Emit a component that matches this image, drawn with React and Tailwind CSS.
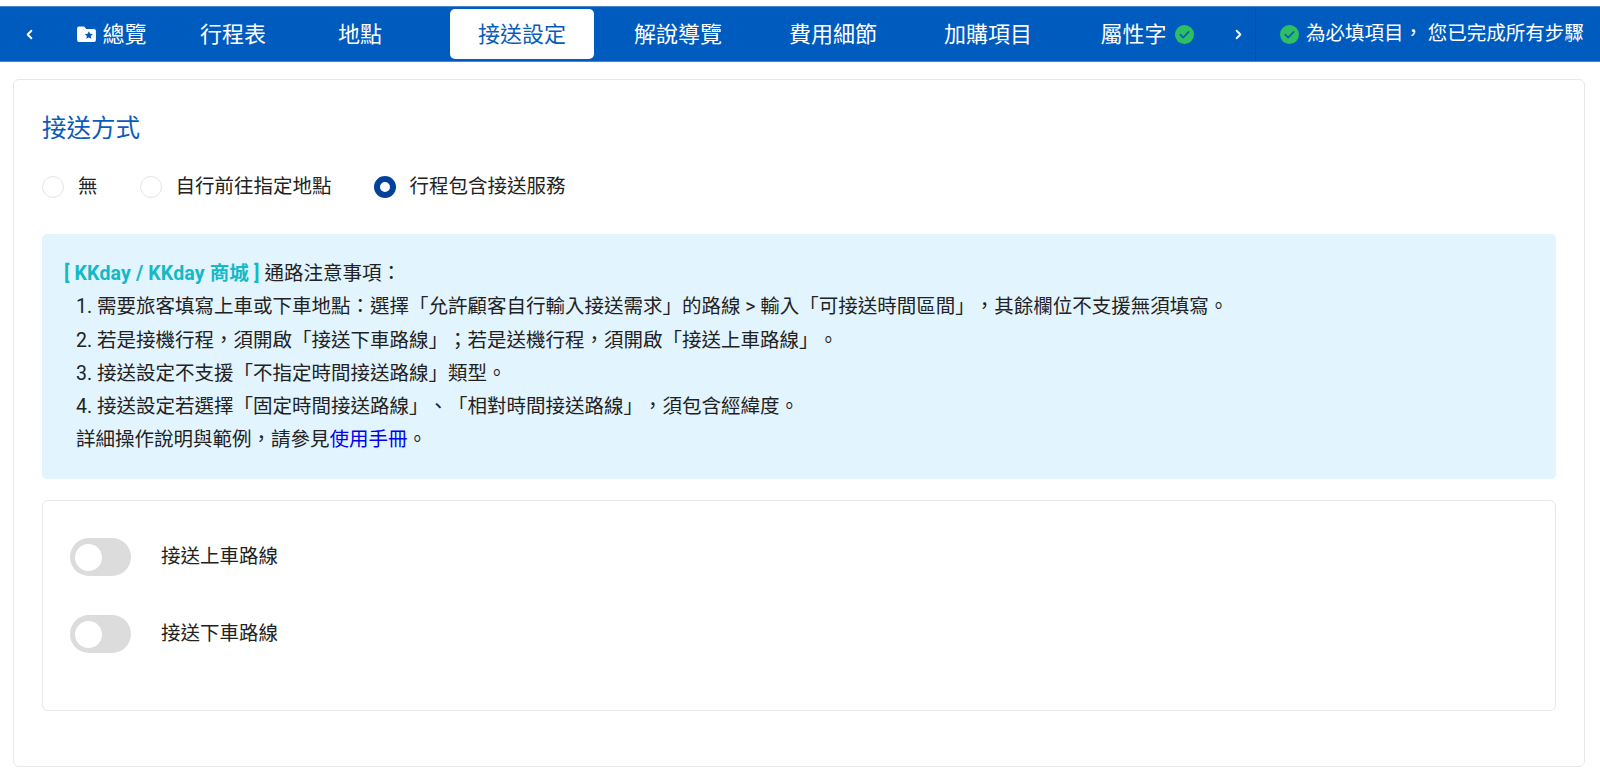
import { ChevronLeft, ChevronRight } from "lucide-react";

const font = { fontFamily: "Roboto, 'Noto Sans CJK TC', sans-serif" };

function CheckDot({ className }) {
  return (
    <svg className={className} viewBox="0 0 20 20">
      <circle cx="10" cy="10" r="10" fill="#2fbf63" />
      <path d="M5.6 10.2l3 3 5.8-6" fill="none" stroke="#0b5fb0" strokeWidth="1.8" strokeLinecap="round" strokeLinejoin="round" />
    </svg>
  );
}

function FolderStar() {
  return (
    <svg className="w-[19px] h-[16px] mr-[6px]" viewBox="0 0 20 17">
      <path d="M2 0.5h5.5l2.2 2.7H18a2 2 0 0 1 2 2V15a2 2 0 0 1-2 2H2a2 2 0 0 1-2-2V2.500a2 2 0 0 1 2-2z" fill="#fff" />
      <path d="M12.500 5.500l1.300 2.700 3 .4-2.200 2 .6 3-2.700-1.500-2.700 1.500.6-3-2.200-2 3-.4z" fill="#005bbf" />
    </svg>
  );
}

function Radio({ label, checked, gap }) {
  return (
    <label className={`flex items-center ${gap}`}>
      {checked ? (
        <span className="w-[22px] h-[22px] rounded-full border-[6px] border-[#05409a] bg-white" />
      ) : (
        <span className="w-[22px] h-[22px] rounded-full border border-[#e6e6e6] bg-white" />
      )}
      <span className="ml-[14px]">{label}</span>
    </label>
  );
}

function Toggle({ label }) {
  return (
    <div className="flex items-center h-[38px]">
      <span className="w-[61px] h-[38px] rounded-full bg-[#dcdcdc] flex items-center pl-[5px]">
        <span className="w-[27px] h-[27px] rounded-full bg-white" />
      </span>
      <span className="ml-[30px]">{label}</span>
    </div>
  );
}

const notes = [
  "1. 需要旅客填寫上車或下車地點：選擇「允許顧客自行輸入接送需求」的路線 > 輸入「可接送時間區間」，其餘欄位不支援無須填寫。",
  "2. 若是接機行程，須開啟「接送下車路線」；若是送機行程，須開啟「接送上車路線」。",
  "3. 接送設定不支援「不指定時間接送路線」類型。",
  "4. 接送設定若選擇「固定時間接送路線」、「相對時間接送路線」，須包含經緯度。",
];

export default function App() {
  return (
    <div className="h-[782px] bg-white text-[19.5px] text-[#222] overflow-hidden [text-spacing-trim:space-all]" style={font}>
      <div className="h-[6px]" />
      {/* top tabs */}
      <nav className="h-[56px] bg-[#005bbf] border-y border-[#4a84cf] text-white text-[22px] flex items-center">
        <div className="w-[55px] flex justify-center pl-[4px]">
          <ChevronLeft size={15} strokeWidth={3} />
        </div>
        <div className="w-[114px] flex items-center justify-center">
          <FolderStar />
          總覽
        </div>
        <div className="w-[128px] text-center">行程表</div>
        <div className="w-[126px] text-center">地點</div>
        <div className="ml-[27px] w-[144px] h-[50px] rounded-[5px] bg-white text-[#0a5cb8] flex items-center justify-center">
          接送設定
        </div>
        <div className="ml-[12px] w-[144px] text-center">解說導覽</div>
        <div className="ml-[11px] w-[144px] text-center">費用細節</div>
        <div className="ml-[11px] w-[144px] text-center">加購項目</div>
        <div className="ml-[15px] w-[144px] flex items-center justify-center">
          屬性字
          <CheckDot className="w-[19px] h-[19px] ml-[8px]" />
        </div>
        <div className="w-[36px] flex justify-center pl-[3px]">
          <ChevronRight size={15} strokeWidth={3} />
        </div>
        <div className="flex-1 h-full border-l border-[#0a4f9e] flex items-center pl-[24px] text-[19.5px]">
          <CheckDot className="w-[19px] h-[19px] mr-[7px]" />
          為必填項目， 您已完成所有步驟
        </div>
      </nav>

      {/* main card */}
      <main className="mt-[17px] ml-[13px] w-[1572px] h-[688px] border border-[#e8e8e8] rounded-[6px] px-[28px] pt-[30px]">
        <h2 className="text-[24.5px] leading-[38px] text-[#0a5cb8]">接送方式</h2>
        <div className="mt-[24px] flex items-center h-[30px]">
          <Radio label="無" gap="mr-[42px]" />
          <Radio label="自行前往指定地點" gap="mr-[42px]" checked={false} />
          <Radio label="行程包含接送服務" checked />
        </div>

        <div className="mt-[32px] h-[245px] rounded-[5px] bg-[#e2f4fe] pl-[22px] pt-[23px] leading-[33.3px]">
          <p>
            <b className="font-bold tracking-[0.15px] text-[#14b8c6]">[ KKday / KKday 商城 ]</b> 通路注意事項：
          </p>
          <div className="pl-[12px]">
            {notes.map((n) => (
              <p key={n}>{n}</p>
            ))}
            <p>
              詳細操作說明與範例，請參見<a className="text-[#0000ee]">使用手冊</a>。
            </p>
          </div>
        </div>

        <section className="mt-[21px] h-[211px] border border-[#e8e8e8] rounded-[6px] pl-[27px] pt-[37px] flex flex-col gap-[39px]">
          <Toggle label="接送上車路線" />
          <Toggle label="接送下車路線" />
        </section>
      </main>
    </div>
  );
}
